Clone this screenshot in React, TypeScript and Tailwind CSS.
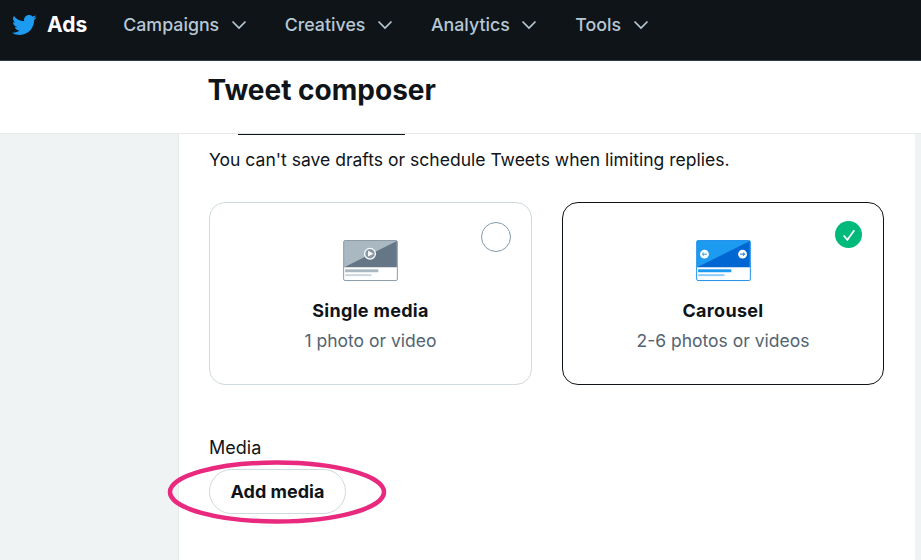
import React from "react";

function Chevron() {
  return (
    <svg width="16" height="16" viewBox="0 0 16 16" fill="none" className="block">
      <path d="M1.5 4.5 L8 11 L14.5 4.5" stroke="#b6c8d4" strokeWidth="1.7" />
    </svg>
  );
}

function Bird() {
  return (
    <svg width="26" height="22" viewBox="0 0 24 20" className="block">
      <path
        fill="#1d9bf0"
        d="M23.643 2.937c-.835.37-1.732.62-2.675.733.962-.576 1.7-1.49 2.048-2.578-.9.534-1.897.922-2.958 1.13-.85-.904-2.06-1.47-3.4-1.47-2.572 0-4.658 2.086-4.658 4.66 0 .364.042.718.12 1.06-3.873-.195-7.304-2.05-9.602-4.868-.4.69-.63 1.49-.63 2.342 0 1.616.823 3.043 2.072 3.878-.764-.025-1.482-.234-2.11-.583v.06c0 2.257 1.605 4.14 3.737 4.568-.392.106-.803.162-1.227.162-.3 0-.593-.028-.877-.082.593 1.85 2.313 3.198 4.352 3.234-1.595 1.25-3.604 1.995-5.786 1.995-.376 0-.747-.022-1.112-.065 2.062 1.323 4.51 2.093 7.14 2.093 8.57 0 13.255-7.098 13.255-13.254 0-.2-.005-.402-.014-.602.91-.658 1.7-1.477 2.323-2.41z"
      />
    </svg>
  );
}

function NavItem({ label }: { label: string }) {
  return (
    <div className="flex items-center gap-[11.5px]">
      <span className="text-[17.8px] leading-[26px] font-medium text-[#b6c8d4]">{label}</span>
      <Chevron />
    </div>
  );
}

function SingleIcon() {
  return (
    <svg width="55" height="42" viewBox="0 0 56 43" className="block">
      <rect x="0.5" y="0.5" width="55" height="41" rx="1.5" fill="#fff" stroke="#8899a6" />
      <path d="M1 1 H55 V28 H1 Z" fill="#657786" />
      <path d="M1 28 V1 H55 Z" fill="#aab8c2" />
      <circle cx="27.5" cy="14" r="5.5" fill="#8899a6" stroke="#fff" strokeWidth="1.3" />
      <path d="M25.5 11 L31 14 L25.5 17 Z" fill="#fff" />
      <rect x="2" y="30" width="34" height="3" fill="#aab8c2" />
      <rect x="2" y="35" width="27" height="2" fill="#ccd6dd" />
    </svg>
  );
}

function CarouselIcon() {
  return (
    <svg width="55" height="42" viewBox="0 0 56 43" className="block">
      <rect x="0.5" y="0.5" width="55" height="41" rx="1.5" fill="#fff" stroke="#1d8fe8" />
      <path d="M1 1 H55 V28 H1 Z" fill="#0066d2" />
      <path d="M1 28 V1 H55 Z" fill="#1d9bf0" />
      <circle cx="8.5" cy="14.5" r="4.5" fill="#fff" />
      <path d="M11 14.5 H6.5 M8 13 L6.3 14.5 L8 16" stroke="#1d9bf0" strokeWidth="1" fill="none" />
      <circle cx="47.5" cy="14.5" r="4.5" fill="#fff" />
      <path d="M45 14.5 H49.5 M48 13 L49.7 14.5 L48 16" stroke="#0066d2" strokeWidth="1" fill="none" />
      <rect x="2" y="30" width="34" height="3" fill="#1d9bf0" />
      <rect x="2" y="35" width="27" height="2" fill="#8ecdf8" />
    </svg>
  );
}

function Card({
  title,
  sub,
  icon,
  selected,
}: {
  title: string;
  sub: string;
  icon: React.ReactNode;
  selected?: boolean;
}) {
  return (
    <div
      className={
        "relative h-[183px] rounded-[16px] border flex flex-col items-center pt-[37px] " +
        (selected ? "w-[322px] border-[#0f1419]" : "w-[323px] border-[#cfd9de]")
      }
    >
      {icon}
      <div className="mt-[17px] text-[18px] tracking-[0.3px] leading-[24px] font-bold text-[#0f1419]">{title}</div>
      <div className="mt-[6px] text-[17.5px] leading-[24px] text-[#536471]">{sub}</div>
      {selected ? (
        <div className="absolute top-[18px] right-[21px] w-[27px] h-[27px] rounded-full bg-[#00ba7c] flex items-center justify-center">
          <svg width="16" height="16" viewBox="0 0 15 15" fill="none">
            <path d="M2.5 8 L6 12 L12.5 3" stroke="#fff" strokeWidth="1.6" />
          </svg>
        </div>
      ) : (
        <div className="absolute top-[19px] right-[20px] w-[30px] h-[30px] rounded-full border border-[#829aab]" />
      )}
    </div>
  );
}

export default function App() {
  return (
    <div
      className="relative w-[921px] h-[560px] overflow-hidden bg-white flex flex-col"
      style={{ fontFamily: "Inter, 'Liberation Sans', sans-serif" }}
    >
      <header className="h-[61px] shrink-0 bg-[#0f1419] border-b border-[#2f3a44] flex items-center pl-[11px] pb-[10px]">
        <Bird />
        <span className="ml-[10px] text-[21px] leading-[28px] font-bold text-white">Ads</span>
        <nav className="ml-[36px] flex items-center gap-[38px]">
          <NavItem label="Campaigns" />
          <NavItem label="Creatives" />
          <NavItem label="Analytics" />
          <NavItem label="Tools" />
        </nav>
      </header>
      <div className="h-[73px] shrink-0 border-b border-[#e6e9ea] pl-[207.5px] pt-[13px]">
        <h1 className="text-[28px] leading-[32px] font-bold text-[#0f1419]">Tweet composer</h1>
      </div>
      <div className="flex-1 flex min-h-0">
        <div className="w-[179px] shrink-0 bg-[#eff3f4] border-r border-[#e6e9ea]" />
        <main className="w-[736px] shrink-0 bg-white pl-[30px]">
          <div className="ml-[29px] w-[167px] h-px bg-[#0f1419]" />
          <p className="mt-[13px] text-[17.55px] leading-[24px] text-[#0f1419]">
            You can't save drafts or schedule Tweets when limiting replies.
          </p>
          <div className="mt-[30px] flex gap-[30px]">
            <Card title="Single media" sub="1 photo or video" icon={<SingleIcon />} />
            <Card title="Carousel" sub="2-6 photos or videos" icon={<CarouselIcon />} selected />
          </div>
          <div className="mt-[51px] text-[18px] leading-[24px] text-[#0f1419]">Media</div>
          <button className="mt-[9px] h-[45px] w-[137px] rounded-full border border-[#cfd9de] bg-white text-[18px] font-bold text-[#0f1419]">
            Add media
          </button>
        </main>
        <div className="flex-1 bg-[#eff3f4]" />
      </div>
      <svg width="921" height="560" className="absolute inset-0 pointer-events-none">
        <ellipse cx="277" cy="492" rx="107" ry="29.5" fill="none" stroke="#e8297e" strokeWidth="4.5" />
      </svg>
    </div>
  );
}
